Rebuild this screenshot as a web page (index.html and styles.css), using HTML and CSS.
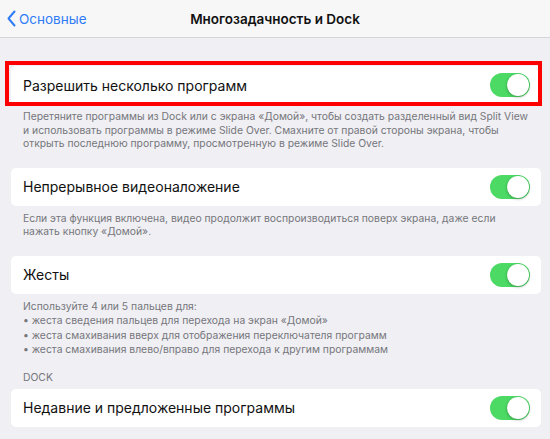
FILE: index.html
```html
<!DOCTYPE html>
<html lang="ru">
<head>
<meta charset="utf-8">
<link rel="stylesheet" href="styles.css">
</head>
<body>
<div class="screen">
  <header class="nav">
    <div class="back">
      <svg class="chev" width="9" height="17" viewBox="0 0 9 17"><path d="M7.5 1.5 L1.5 8.5 L7.5 15.5" fill="none" stroke="#2f7cf6" stroke-width="2" stroke-linecap="round" stroke-linejoin="round"/></svg>
      <span>Основные</span>
    </div>
    <div class="title">Многозадачность и Dock</div>
  </header>
  <main class="content">
    <div class="group">
      <div class="cell highlighted">
        <span class="label">Разрешить несколько программ</span>
        <span class="toggle"><span class="knob"></span></span>
      </div>
      <p class="footer">Перетяните программы из Dock или с экрана «Домой», чтобы создать разделенный вид Split View<br>и использовать программы в режиме Slide Over. Смахните от правой стороны экрана, чтобы<br>открыть последнюю программу, просмотренную в режиме Slide Over.</p>
    </div>
    <div class="group">
      <div class="cell">
        <span class="label">Непрерывное видеоналожение</span>
        <span class="toggle"><span class="knob"></span></span>
      </div>
      <p class="footer">Если эта функция включена, видео продолжит воспроизводиться поверх экрана, даже если<br>нажать кнопку «Домой».</p>
    </div>
    <div class="group gestures">
      <div class="cell">
        <span class="label">Жесты</span>
        <span class="toggle"><span class="knob"></span></span>
      </div>
      <p class="footer lists">Используйте 4 или 5 пальцев для:<br>• жеста сведения пальцев для перехода на экран «Домой»<br>• жеста смахивания вверх для отображения переключателя программ<br>• жеста смахивания влево/вправо для перехода к другим программам</p>
    </div>
    <div class="group">
      <div class="header">DOCK</div>
      <div class="cell">
        <span class="label">Недавние и предложенные программы</span>
        <span class="toggle"><span class="knob"></span></span>
      </div>
    </div>
  </main>
</div>
</body>
</html>
```
FILE: styles.css
```css
* { box-sizing: border-box; }
html, body { margin: 0; padding: 0; }
body {
  width: 550px;
  height: 439px;
  overflow: hidden;
  background: #efeff4;
  font-family: Inter, "Noto Sans", sans-serif;
  -webkit-font-smoothing: antialiased;
}
.screen { width: 550px; height: 439px; overflow: hidden; }
.nav {
  height: 38px;
  background: #f7f7f8;
  border-bottom: 1px solid #d6d6da;
  display: flex;
  align-items: center;
  position: relative;
  padding-left: 7px;
}
.back {
  display: flex;
  align-items: center;
  gap: 3px;
  color: #2f7cf6;
  font-size: 13.5px;
}
.title {
  position: absolute;
  left: 0;
  right: 0;
  text-align: center;
  font-size: 13.5px;
  font-weight: 600;
  color: #111;
  pointer-events: none;
}
.content {
  padding: 28px 9px 0 11px;
}
.group { margin-bottom: 17px; }
.group.gestures { margin-bottom: 14px; }
.cell {
  height: 38px;
  background: #fff;
  border-radius: 5px;
  display: flex;
  align-items: center;
  justify-content: space-between;
  padding: 0 11px 0 12px;
}
.highlighted { position: relative; }
.highlighted::after {
  content: "";
  position: absolute;
  left: -6px;
  right: -1px;
  top: -5px;
  bottom: -2px;
  border: 4px solid #f00;
  pointer-events: none;
}
.label { font-size: 14px; color: #111; }
.toggle {
  width: 40px;
  height: 24px;
  border-radius: 12px;
  background: #4cd964;
  position: relative;
  flex: none;
}
.knob {
  position: absolute;
  right: 1px;
  top: 1px;
  width: 22px;
  height: 22px;
  border-radius: 50%;
  background: #fff;
  box-shadow: 0 1px 3px rgba(0,0,0,0.3);
}
.footer {
  margin: 0;
  padding: 6px 12px 0;
  font-size: 10.35px;
  line-height: 13.5px;
  color: #76767b;
  white-space: nowrap;
}
.footer.lists { line-height: 14.5px; padding-top: 5px; }
.header {
  padding: 0 12px 6px;
  font-size: 10.35px;
  color: #76767b;
  text-transform: uppercase;
}
```
